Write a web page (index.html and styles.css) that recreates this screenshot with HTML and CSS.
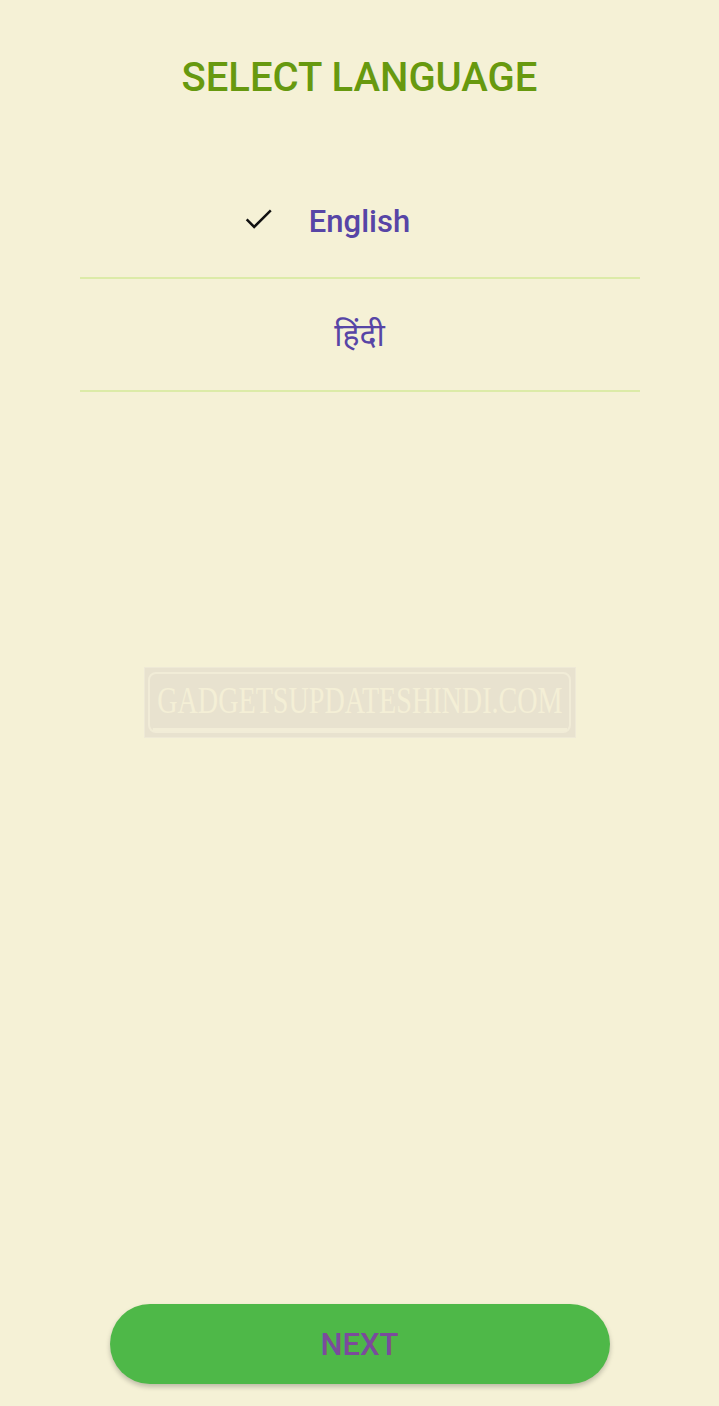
FILE: index.html
```html
<!DOCTYPE html>
<html lang="en">
<head>
    <meta charset="UTF-8">
    <meta name="viewport" content="width=device-width, initial-scale=1.0">
    <title>Select Language</title>
    <link rel="stylesheet" href="styles.css">
</head>
<body>
    <div class="screen">
        <h1 class="title">SELECT LANGUAGE</h1>

        <!-- language list -->
        <ul class="lang-list">
            <li class="lang-item selected">
                <span class="lang-label">
                    <svg class="check" viewBox="0 0 28 24" width="30" height="26">
                        <path d="M2.5 12 L9.5 19 L25 3.5" fill="none" stroke="#111" stroke-width="2.3"/>
                    </svg>
                    English
                </span>
            </li>
            <li class="lang-item">
                <span class="lang-label hindi">हिंदी</span>
            </li>
        </ul>

        <button class="next-btn">NEXT</button>

        <!-- watermark -->
        <div class="watermark">
            <div class="watermark-inner">
                <span class="watermark-text">GADGETSUPDATESHINDI.COM</span>
            </div>
        </div>
    </div>
</body>
</html>
```

FILE: styles.css
```css
* {
    margin: 0;
    padding: 0;
    box-sizing: border-box;
}

body {
    font-family: Roboto, 'Noto Sans', sans-serif;
    background-color: #F5F1D6;
}

.screen {
    position: relative;
    display: flex;
    flex-direction: column;
    align-items: center;
    min-height: 100vh;
    padding: 55px 0 22px;
}

.title {
    font-size: 40px;
    font-weight: 500;
    color: #67990F;
    line-height: 46px;
}

.lang-list {
    list-style: none;
    width: 560px;
    margin-top: 65px;
}

.lang-item {
    height: 113px;
    display: flex;
    align-items: center;
    justify-content: center;
    border-bottom: 2px solid #DCEBA8;
}

.lang-label {
    position: relative;
    font-size: 31px;
    color: #5745A6;
}

.selected .lang-label {
    font-weight: 500;
}

.hindi {
    font-family: 'Noto Sans Devanagari', 'Noto Sans', 'Lohit Devanagari', sans-serif;
    font-size: 32px;
    padding-top: 6px;
}

.check {
    position: absolute;
    right: calc(100% + 35px);
    top: 50%;
    transform: translateY(-60%);
}

.next-btn {
    margin-top: auto;
    width: 500px;
    height: 80px;
    border: none;
    border-radius: 40px;
    background-color: #4EB848;
    color: #7B4B9C;
    font-family: Roboto, sans-serif;
    font-size: 31px;
    font-weight: 500;
    box-shadow: 0 3px 5px rgba(0, 0, 0, 0.22);
}

.watermark {
    position: absolute;
    left: 144px;
    top: 667px;
    width: 432px;
    height: 71px;
    padding: 4px 4px 4px 3px;
    background-color: #E8E2CF;
    border: 1px solid #EEE9D6;
}

.watermark-inner {
    height: 100%;
    border: 2px solid #F1ECD7;
    border-radius: 8px;
    display: flex;
    justify-content: center;
    padding-top: 6px;
}

.watermark-text {
    display: inline-block;
    font-family: 'Liberation Serif', serif;
    font-size: 38px;
    line-height: 40px;
    color: #F4EFD6;
    white-space: nowrap;
    border-bottom: 3px solid #F2EDD7;
    padding: 0 6px 4px;
    transform: scaleX(0.74);
}
```
